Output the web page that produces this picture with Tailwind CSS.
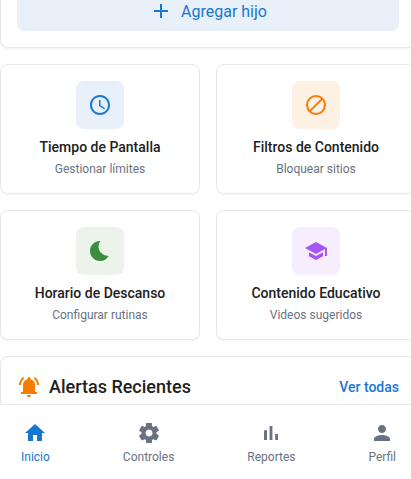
<!DOCTYPE html>
<html lang="es">
  <head>
    <meta charset="UTF-8" />
    <meta name="viewport" content="width=device-width, initial-scale=1.0" />
    <title>Control Parental</title>
    <script src="https://cdn.jsdelivr.net/npm/@tailwindcss/browser@4"></script>
  </head>
  <body class="h-screen overflow-hidden bg-white font-[Roboto,sans-serif] text-[#212121]">
    <div class="flex h-screen w-[416px] flex-col">
      <main class="flex min-h-0 flex-1 flex-col gap-4 overflow-hidden">
        <!-- Hijos -->
        <section class="shrink-0 rounded-lg rounded-t-none border border-t-0 border-gray-200 px-4 pb-4 shadow-xs">
          <button class="flex h-[31px] w-full items-end justify-center gap-2 rounded-b-lg bg-[#e8f0f9] pb-2 text-[#1976d2]">
            <svg class="size-6" viewBox="0 0 24 24" fill="currentColor"><path d="M19 13h-6v6h-2v-6H5v-2h6V5h2v6h6v2z" /></svg>
            <span class="text-base/[22px]">Agregar hijo</span>
          </button>
        </section>

        <!-- Accesos rápidos -->
        <section class="grid shrink-0 grid-cols-2 gap-4 text-center">
          <div class="flex flex-col items-center rounded-lg border border-gray-200 p-4 shadow-xs">
            <div class="mb-2 flex size-12 items-center justify-center rounded-lg bg-[#e8f0f9] text-[#1976d2]">
              <svg class="size-6" viewBox="0 0 24 24" fill="currentColor"><path d="M11.99 2C6.47 2 2 6.48 2 12s4.47 10 9.99 10C17.52 22 22 17.52 22 12S17.52 2 11.99 2zM12 20c-4.42 0-8-3.58-8-8s3.58-8 8-8 8 3.58 8 8-3.58 8-8 8zm.5-13H11v6l5.25 3.15.75-1.23-4.5-2.67z" /></svg>
            </div>
            <h3 class="text-sm font-medium">Tiempo de Pantalla</h3>
            <p class="mt-1 text-xs text-gray-500">Gestionar límites</p>
          </div>
          <div class="flex flex-col items-center rounded-lg border border-gray-200 p-4 shadow-xs">
            <div class="mb-2 flex size-12 items-center justify-center rounded-lg bg-[#fef1e3] text-[#f57c00]">
              <svg class="size-6" viewBox="0 0 24 24" fill="none" stroke="currentColor" stroke-width="2"><circle cx="12" cy="12" r="9" /><path d="M5.6 18.4L18.4 5.6" /></svg>
            </div>
            <h3 class="text-sm font-medium">Filtros de Contenido</h3>
            <p class="mt-1 text-xs text-gray-500">Bloquear sitios</p>
          </div>
          <div class="flex flex-col items-center rounded-lg border border-gray-200 p-4 shadow-xs">
            <div class="mb-2 flex size-12 items-center justify-center rounded-lg bg-[#ebf3eb] text-[#388e3c]">
              <svg class="size-6" viewBox="0 0 24 24" fill="currentColor"><path d="M12.34 2.02C6.59 1.82 2 6.42 2 12c0 5.52 4.48 10 10 10 3.71 0 6.93-2.02 8.66-5.02-7.51-.25-13.09-7.44-8.32-14.96z" /></svg>
            </div>
            <h3 class="text-sm font-medium">Horario de Descanso</h3>
            <p class="mt-1 text-xs text-gray-500">Configurar rutinas</p>
          </div>
          <div class="flex flex-col items-center rounded-lg border border-gray-200 p-4 shadow-xs">
            <div class="mb-2 flex size-12 items-center justify-center rounded-lg bg-[#f6edfe] text-[#a855f7]">
              <svg class="size-6" viewBox="0 0 24 24" fill="currentColor"><path d="M5 13.18v4L12 21l7-3.82v-4L12 17l-7-3.82zM12 3L1 9l11 6 9-4.91V17h2V9L12 3z" /></svg>
            </div>
            <h3 class="text-sm font-medium">Contenido Educativo</h3>
            <p class="mt-1 text-xs text-gray-500">Videos sugeridos</p>
          </div>
        </section>

        <!-- Alertas -->
        <section class="shrink-0 rounded-lg border border-gray-200 p-4 shadow-xs">
          <div class="flex items-center justify-between">
            <h2 class="flex items-center gap-2 text-lg font-medium">
              <svg class="size-6 text-[#f57c00]" viewBox="0 0 24 24" fill="currentColor"><path d="M2 10q0-2.5 1.113-4.587T6.1 1.95l1.175 1.6q-1.5 1.1-2.388 2.775T4 10zm18 0q0-2-.888-3.675T16.726 3.55l1.175-1.6q1.875 1.375 2.988 3.463T22 10zM4 19v-2h2v-7q0-2.075 1.25-3.687T10.5 4.2v-.7q0-.625.438-1.062T12 2t1.063.438T13.5 3.5v.7q2 .5 3.25 2.113T18 10v7h2v2zm8 3q-.825 0-1.412-.587T10 20h4q0 .825-.587 1.413T12 22" /></svg>
              Alertas Recientes
            </h2>
            <a href="#" class="text-sm font-medium text-[#1976d2]">Ver todas</a>
          </div>
        </section>
      </main>

      <!-- Navegación inferior -->
      <nav class="flex h-[75px] shrink-0 justify-between border-t border-gray-200 bg-white pt-4 pr-5 pl-[21px] text-xs text-gray-500">
        <a href="#" class="flex flex-col items-center gap-1 text-[#1976d2]">
          <svg class="size-6" viewBox="0 0 24 24" fill="currentColor"><path d="M10 20v-6h4v6h5v-8h3L12 3 2 12h3v8z" /></svg>
          <span>Inicio</span>
        </a>
        <a href="#" class="flex flex-col items-center gap-1">
          <svg class="size-6" viewBox="0 0 24 24" fill="currentColor"><path d="m9.25 22l-.4-3.2q-.325-.125-.612-.3t-.563-.375L4.7 19.375l-2.75-4.75l2.575-1.95Q4.5 12.5 4.5 12.338v-.675q0-.163.025-.338L1.95 9.375l2.75-4.75l2.975 1.25q.275-.2.575-.375t.6-.3l.4-3.2h5.5l.4 3.2q.325.125.613.3t.562.375l2.975-1.25l2.75 4.75l-2.575 1.95q.025.175.025.338v.674q0 .163-.05.338l2.575 1.95l-2.75 4.75l-2.95-1.25q-.275.2-.575.375t-.6.3l-.4 3.2zm2.8-6.5q1.45 0 2.475-1.025T15.55 12t-1.025-2.475T12.05 8.5q-1.475 0-2.488 1.025T8.55 12t1.013 2.475T12.05 15.5" /></svg>
          <span>Controles</span>
        </a>
        <a href="#" class="flex flex-col items-center gap-1">
          <svg class="size-6" viewBox="0 0 24 24" fill="currentColor"><path d="M5 9.2h3V19H5zM10.6 5h2.8v14h-2.8zm5.6 8H19v6h-2.8z" /></svg>
          <span>Reportes</span>
        </a>
        <a href="#" class="flex flex-col items-center gap-1">
          <svg class="size-6" viewBox="0 0 24 24" fill="currentColor"><path d="M12 12c2.21 0 4-1.79 4-4s-1.79-4-4-4-4 1.79-4 4 1.79 4 4 4zm0 2c-2.67 0-8 1.34-8 4v2h16v-2c0-2.66-5.33-4-8-4z" /></svg>
          <span>Perfil</span>
        </a>
      </nav>
    </div>
  </body>
</html>
